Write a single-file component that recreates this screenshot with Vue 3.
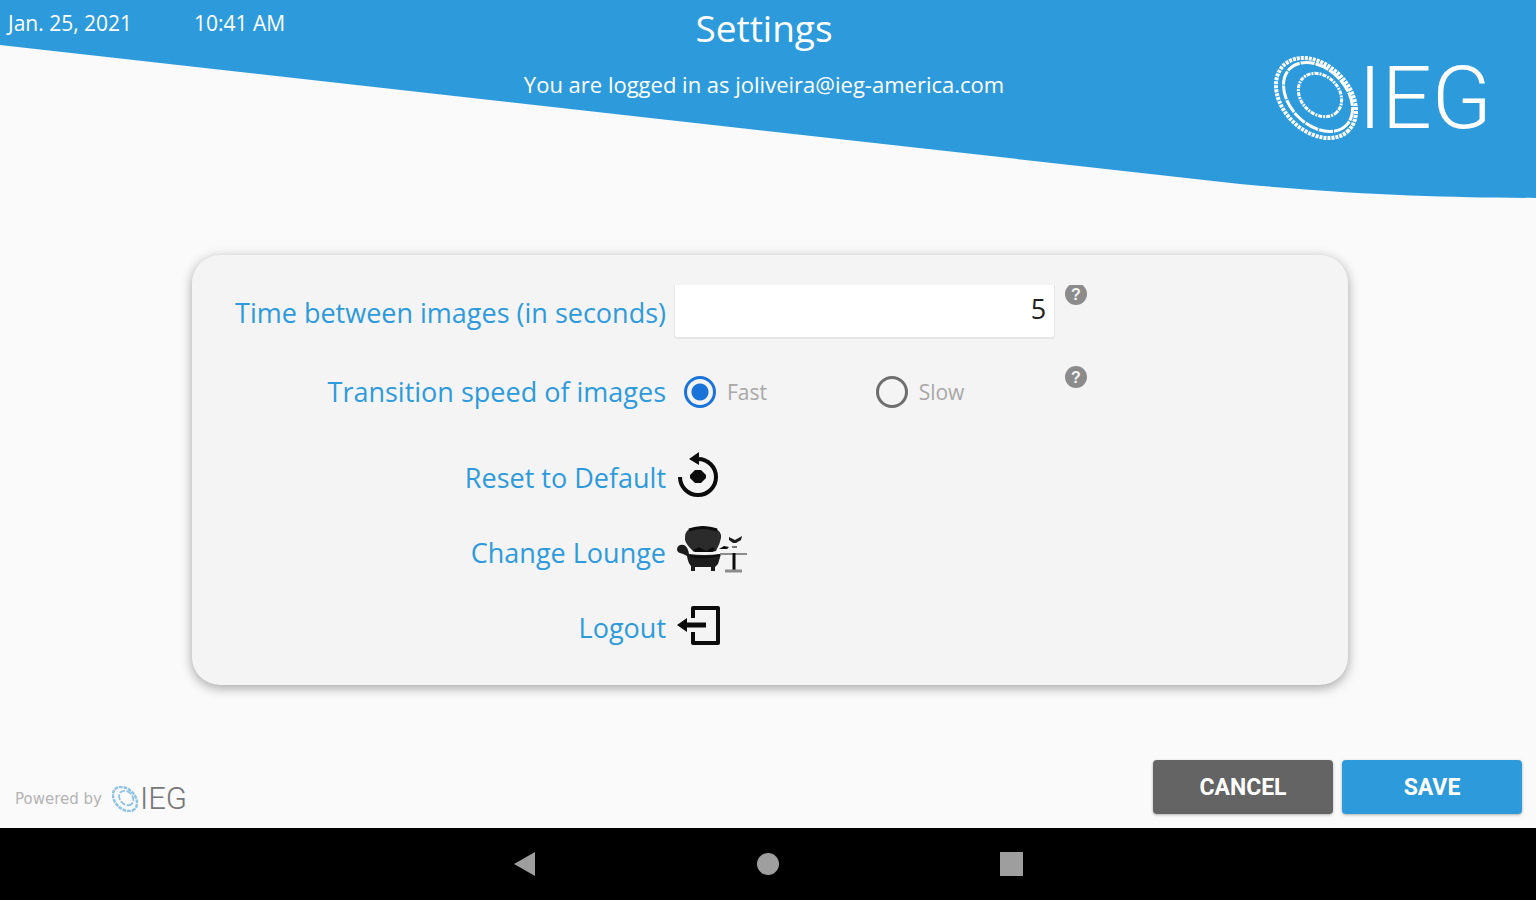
<template>
    <div class="screen">
        <header class="topbar">
            <svg class="wave" viewBox="0 0 1536 198" preserveAspectRatio="none" aria-hidden="true">
                <path d="M0 0H1536V198C1450 197 1370 196 1240 184L0 45Z" fill="#2d9bdb" />
            </svg>
            <div class="clock">
                <span class="date">{{ date }}</span>
                <span>{{ time }}</span>
            </div>
            <div class="heading">
                <h1>Settings</h1>
                <p>You are logged in as {{ email }}</p>
            </div>
            <div class="logo">
                <svg class="rings" viewBox="0 0 84 84" aria-hidden="true">
                    <g fill="none" stroke="currentColor">
                        <ellipse cx="42" cy="42" rx="46" ry="33" transform="rotate(45 42 42)" stroke-width="4" stroke-dasharray="3 1" />
                        <ellipse cx="44" cy="41" rx="40" ry="28" transform="rotate(45 44 41)" stroke-width="3" stroke-dasharray="14 1" />
                        <ellipse cx="46" cy="39" rx="24" ry="19" transform="rotate(45 46 39)" stroke-width="3" stroke-dasharray="4 1 2 1" />
                    </g>
                </svg>
                <span>IEG</span>
            </div>
        </header>

        <main>
            <form id="settings" class="card" @submit.prevent>
                <div class="row first">
                    <label for="seconds">Time between images (in seconds)</label>
                    <input id="seconds" v-model="seconds" class="seconds" type="text" inputmode="numeric">
                    <button type="button" class="help" aria-label="Help for time between images">
                        <svg viewBox="0 0 22 22">
                            <circle cx="11" cy="11" r="11" fill="#8b8b8b" />
                            <text x="11" y="17" text-anchor="middle">?</text>
                        </svg>
                    </button>
                </div>
                <div class="row speed" role="radiogroup" aria-labelledby="speedLabel">
                    <span id="speedLabel" class="name">Transition speed of images</span>
                    <div class="options">
                        <label v-for="option in speeds" :key="option" class="option">
                            <input v-model="speed" type="radio" name="speed" :value="option">
                            <span>{{ option }}</span>
                        </label>
                    </div>
                    <button type="button" class="help" aria-label="Help for transition speed">
                        <svg viewBox="0 0 22 22">
                            <circle cx="11" cy="11" r="11" fill="#8b8b8b" />
                            <text x="11" y="17" text-anchor="middle">?</text>
                        </svg>
                    </button>
                </div>
                <div class="row action">
                    <label for="reset">Reset to Default</label>
                    <button id="reset" type="button" class="iconbtn" @click="reset">
                        <svg width="44" height="46" viewBox="0 0 44 46">
                            <path d="M4 25A18 18 0 1 0 22 7H17" fill="none" stroke="#0c0c0c" stroke-width="4" />
                            <path d="M13 7L23 0V13Z" fill="#0c0c0c" />
                            <path d="M19 18H25L30 23V26L25 31H19L14 26V23Z" fill="#0c0c0c" />
                        </svg>
                    </button>
                </div>
                <div class="row action">
                    <label for="lounge">Change Lounge</label>
                    <button id="lounge" type="button" class="iconbtn">
                        <svg width="72" height="50" viewBox="0 0 72 50">
                            <path d="M16 3Q27 0 38 3Q46 6 45 13Q44 19 40 26L36 27Q33 23 30 27H24Q21 23 18 27L15 24Q8 17 9 12Q9 5 16 3Z" fill="#2b2b2b" />
                            <path d="M13 5Q27 0 41 5" fill="none" stroke="#0c0c0c" stroke-width="3" />
                            <path d="M17 25L23 22L30 26L37 22L39 25L36 27H19Z" fill="#0c0c0c" />
                            <path d="M1 24Q2 19 8 20Q12 22 13 29Q28 31 45 29L42 39L39 42V46H35V42H19V46H15V41Q12 38 11 31Q8 29 4 28Q1 27 1 24Z" fill="#1c1c1c" />
                            <path d="M14 31Q28 34 44 30" fill="none" stroke="#0c0c0c" stroke-width="2" />
                            <path d="M43 24L48 21L53 22L51 24Z" fill="#0c0c0c" />
                            <path d="M53 12L59 15L66 11L65 15L60 18H57L53 15Z" fill="#1c1c1c" />
                            <path d="M56 22H61" stroke="#777" stroke-width="2" />
                            <path d="M44 29H71" stroke="#8c8c8c" stroke-width="2" />
                            <path d="M58 28V45" stroke="#0c0c0c" stroke-width="3" />
                            <path d="M49 46H66" stroke="#8c8c8c" stroke-width="3" />
                        </svg>
                    </button>
                </div>
                <div class="row action">
                    <label for="logout">Logout</label>
                    <button id="logout" type="button" class="iconbtn">
                        <svg width="46" height="42" viewBox="0 0 46 42">
                            <path d="M17 14V4H42V39H17V28" fill="none" stroke="#0c0c0c" stroke-width="4" stroke-linejoin="round" />
                            <path d="M10 21H30" stroke="#0c0c0c" stroke-width="5" />
                            <path d="M1 21L11 14V28Z" fill="#0c0c0c" />
                        </svg>
                    </button>
                </div>
            </form>
        </main>

        <footer class="bottom">
            <div class="powered">
                <span>Powered by</span>
                <div class="logo small">
                    <svg class="rings" viewBox="0 0 84 84" aria-hidden="true">
                        <g fill="none" stroke="currentColor">
                            <ellipse cx="42" cy="42" rx="45" ry="32" transform="rotate(45 42 42)" stroke-width="8" stroke-dasharray="12 3" />
                            <ellipse cx="46" cy="39" rx="26" ry="20" transform="rotate(45 46 39)" stroke-width="6" stroke-dasharray="18 5" />
                        </g>
                    </svg>
                    <span>IEG</span>
                </div>
            </div>
            <div class="buttons">
                <button type="button" class="btn cancel" @click="reset">CANCEL</button>
                <button type="submit" form="settings" class="btn">SAVE</button>
            </div>
        </footer>

        <nav class="navbar">
            <button type="button" aria-label="Back">
                <svg viewBox="0 0 24 24"><path d="M1 12L22 0V24Z" /></svg>
            </button>
            <button type="button" aria-label="Home">
                <svg viewBox="0 0 24 24"><circle cx="12" cy="12" r="11" /></svg>
            </button>
            <button type="button" aria-label="Recent apps">
                <svg viewBox="0 0 24 24"><path d="M1 0H24V24H1Z" /></svg>
            </button>
        </nav>
    </div>
</template>

<script setup>
import { ref } from 'vue';

const date = 'Jan. 25, 2021';
const time = '10:41 AM';
const email = 'joliveira@ieg-america.com';
const speeds = ['Fast', 'Slow'];
const seconds = ref('5');
const speed = ref('Fast');

const reset = () => {
    seconds.value = '5';
    speed.value = 'Fast';
};
</script>

<style>
body {
    margin: 0;
}
</style>

<style scoped>
* {
    box-sizing: border-box;
}

.screen {
    min-height: 100vh;
    display: flex;
    flex-direction: column;
    background: #fafafa;
    font-family: "Open Sans", "Noto Sans", sans-serif;
}

button {
    padding: 0;
    border: none;
    background: none;
    cursor: pointer;
}

svg {
    display: block;
}

.topbar {
    position: relative;
    display: grid;
    grid-template-columns: 1fr auto 1fr;
    align-items: start;
    min-height: 198px;
    padding: 0 16px 0 8px;
    color: #fff;
}

.wave {
    position: absolute;
    top: 0;
    left: 0;
    width: 100%;
    height: 198px;
}

.clock,
.heading,
.topbar .logo {
    position: relative;
}

.clock {
    display: flex;
    padding-top: 8px;
    font-size: 21px;
    line-height: 30px;
}

.date {
    width: 186px;
}

.heading {
    text-align: center;
}

h1 {
    margin: 0;
    font-size: 37px;
    font-weight: 400;
    line-height: 56px;
}

.heading p {
    margin: 12px 0 0;
    font-size: 22px;
    line-height: 32px;
}

.logo {
    display: flex;
    align-items: center;
    font-family: Roboto, sans-serif;
    font-size: 88px;
    font-weight: 300;
    line-height: 84px;
}

.topbar .logo {
    justify-self: end;
    margin-top: 56px;
    padding-right: 28px;
}

.rings {
    width: 84px;
    height: 84px;
}

main {
    padding-left: 4px;
}

.card {
    width: 75.4%;
    margin: 57px auto 32px;
    padding: 30px 0 20px;
    border-radius: 28px;
    background: #f4f4f4;
    box-shadow: 0 3px 12px rgba(0, 0, 0, 0.35);
}

.row {
    display: grid;
    grid-template-columns: 41% 33% 24px;
    column-gap: 8px;
    align-items: center;
    overflow: hidden;
    color: #2d9bdb;
    font-size: 27px;
    line-height: 36px;
}

.row > label,
.name {
    text-align: right;
}

.first {
    height: 56px;
}

.seconds {
    align-self: start;
    width: 100%;
    height: 54px;
    padding: 0 8px 6px;
    border: 1px solid #e6e6e6;
    border-top: none;
    border-bottom-width: 2px;
    border-radius: 0 0 4px 4px;
    outline: none;
    background: #fff;
    color: #222;
    font: inherit;
    text-align: right;
}

.help {
    align-self: start;
    justify-self: end;
}

.help svg {
    width: 22px;
    height: 22px;
}

.help text {
    fill: #f4f4f4;
    font-size: 16px;
    font-weight: 700;
}

.first .help {
    margin-top: -2px;
}

.speed {
    height: 52px;
    margin: 25px 0 22px;
}

.options {
    display: grid;
    grid-template-columns: 1fr 1fr;
    column-gap: 12px;
    padding-left: 10px;
}

.option {
    display: flex;
    align-items: center;
    gap: 11px;
    color: #a8a8a8;
    font-size: 21px;
}

.option input {
    appearance: none;
    width: 32px;
    height: 32px;
    margin: 0;
    border: 3px solid #6e6e6e;
    border-radius: 50%;
}

.option input:checked {
    border-color: #1a73d9;
    background: radial-gradient(circle, #1a73d9 8px, transparent 9px);
}

.action {
    height: 75px;
}

.iconbtn {
    justify-self: start;
    padding: 0 0 6px 2px;
}

.bottom {
    display: flex;
    justify-content: space-between;
    align-items: flex-end;
    margin-top: auto;
    padding: 0 14px 14px 15px;
}

.powered {
    display: flex;
    align-items: center;
    gap: 10px;
    color: #b4b4b4;
    font-family: "DejaVu Sans", sans-serif;
    font-size: 15px;
}

.small {
    gap: 2px;
    color: #777;
    font-size: 31px;
    line-height: 30px;
}

.small .rings {
    width: 26px;
    height: 26px;
    color: #8fc3e4;
}

.buttons {
    display: flex;
    gap: 9px;
}

.btn {
    width: 180px;
    height: 54px;
    border-radius: 4px;
    background: #2d9bdb;
    box-shadow: 0 1px 3px rgba(0, 0, 0, 0.3);
    color: #fff;
    font-family: Roboto, sans-serif;
    font-size: 23px;
    font-weight: 700;
}

.cancel {
    background: #646464;
}

.navbar {
    display: flex;
    justify-content: center;
    align-items: center;
    gap: 219px;
    height: 72px;
    background: #000;
}

.navbar svg {
    width: 24px;
    height: 24px;
    fill: #9e9e9e;
}
</style>
